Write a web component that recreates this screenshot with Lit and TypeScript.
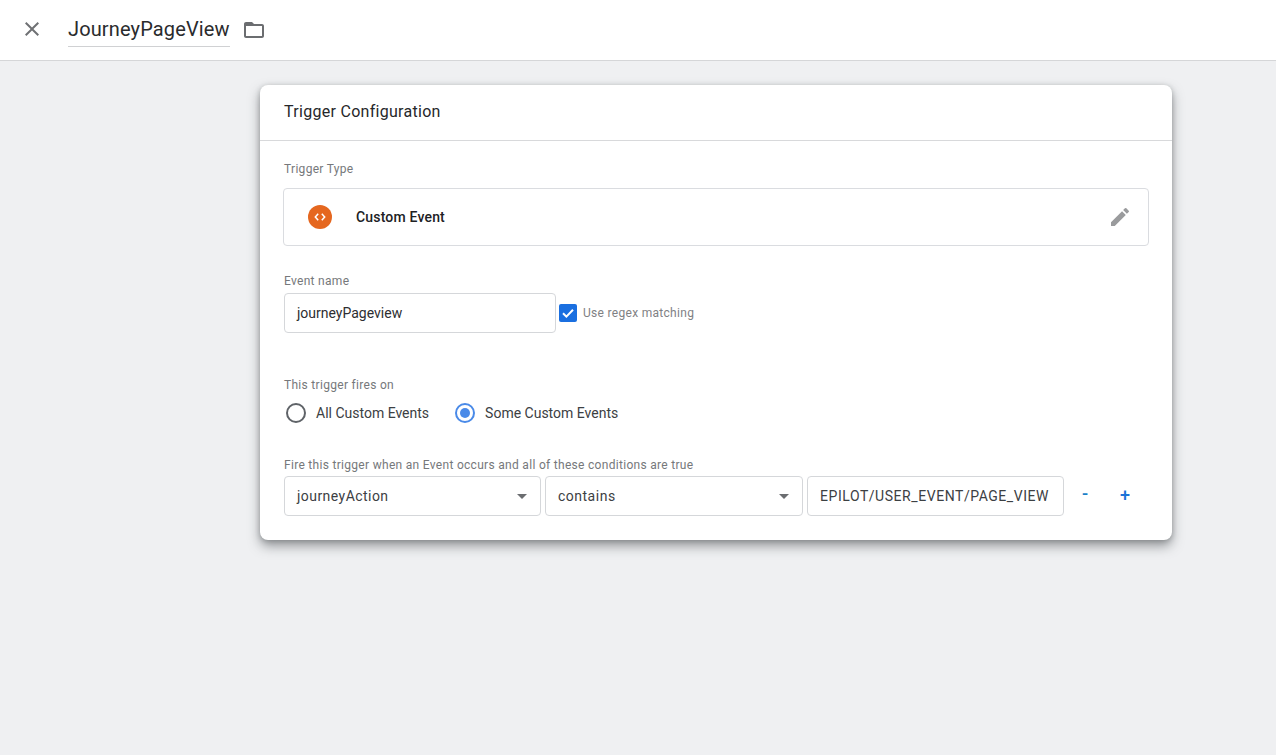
import { LitElement, html, css } from "lit";
import { customElement } from "lit/decorators.js";

@customElement("app-root")
export class AppRoot extends LitElement {
  static styles = css`
    :host { display: block; width: 100%; height: 755px; background: #eff0f2; font-family: Roboto, "Liberation Sans", sans-serif; color: #202124; overflow: hidden; }
    * { box-sizing: border-box; }
    .top { height: 61px; background: #fff; border-bottom: 1px solid #d5d6d8; display: flex; align-items: center; padding-left: 20px; }
    .close { width: 24px; height: 24px; display: block; margin-right: 24px; margin-top: -2px; }
    .name { font-size: 20px; line-height: 24px; height: 35px; width: 162px; padding-top: 5px; border-bottom: 1px solid #d0d1d3; color: #2a2b2d; margin-top: -1px; letter-spacing: .13px; white-space: nowrap; }
    .folder { width: 24px; height: 24px; margin-left: 12px; margin-top: -1px; display: block; }
    .main { padding: 24px 0 0 260px; }
    .card { width: 912px; height: 455px; background: #fff; border-radius: 8px; box-shadow: 0 6px 12px rgba(60,64,67,.5), 0 1px 5px rgba(60,64,67,.25); }
    .head { height: 56px; padding: 0 24px 2px; font-size: 16px; letter-spacing: .29px; display: flex; align-items: center; border-bottom: 1px solid #d8d9db; color: #26272a; }
    .body { padding: 21px 23px 0 24px; }
    .lbl { font-size: 12px; line-height: 14px; letter-spacing: .3px; color: #76787b; }
    .type { margin-top: 12px; margin-left: -1px; height: 58px; border: 1px solid #dadce0; border-radius: 4px; display: flex; align-items: center; padding: 0 16px 0 24px; }
    .badge { width: 24px; height: 24px; border-radius: 50%; background: #e5671f; display: flex; align-items: center; justify-content: center; }
    .badge svg { width: 14px; height: 14px; display: block; }
    .type b { font-weight: 500; font-size: 14px; letter-spacing: .18px; margin-left: 24px; flex: 1; color: #202124; }
    .pencil { width: 24px; height: 24px; display: block; }
    .ev { margin-top: 28px; }
    .row { display: flex; align-items: center; }
    .input { height: 40px; border: 1px solid #d5d7da; border-radius: 4px; font-size: 14px; display: flex; align-items: center; padding-left: 12px; color: #3c4043; background: #fff; white-space: nowrap; }
    .ev .input { width: 272px; margin-top: 5px; color: #2d2e31; }
    .chk { width: 18px; height: 18px; background: #1a6fe0; border-radius: 2px; margin-left: 3px; display: flex; align-items: center; justify-content: center; margin-top: 5px; }
    .chk svg { width: 14px; height: 14px; display: block; }
    .chklbl { font-size: 12px; letter-spacing: .3px; color: #7f8184; margin-left: 6px; margin-top: 4px; }
    .fires { margin-top: 45px; }
    .radios { display: flex; align-items: center; margin-top: 9px; height: 24px; padding-left: 2px; font-size: 14px; color: #3c4043; }
    .radio { width: 20px; height: 20px; border-radius: 50%; border: 2px solid #5f6368; flex: none; display: flex; align-items: center; justify-content: center; }
    .radio.on { border-color: #4a8ae8; margin-left: 26px; }
    .radio.on i { width: 10px; height: 10px; border-radius: 50%; background: #4a8ae8; display: block; }
    .radios span { margin-left: 10px; }
    .cond { margin-top: 33px; }
    .conds { display: flex; align-items: center; margin-top: 4px; }
    .sel { justify-content: space-between; padding-right: 13px; }
    .sel svg { width: 10px; height: 5px; display: block; }
    .s1 { width: 257px; letter-spacing: .45px; }
    .s2 { width: 258px; margin-left: 4px; letter-spacing: .5px; }
    .s3 { width: 257px; margin-left: 4px; letter-spacing: .55px; }
    .pm { color: #1a73d8; font-size: 18px; font-weight: 500; width: 16px; text-align: center; line-height: 20px; margin-top: -2px; }
    .minus { margin-left: 13px; color: #1a80c8; margin-top: -4px; }
    .plus { margin-left: 24px; }
  `;

  render() {
    return html`
      <div class="top">
        <svg class="close" viewBox="0 0 24 24"><path fill="#6f7174" d="M19 6.41 17.59 5 12 10.59 6.41 5 5 6.41 10.59 12 5 17.59 6.41 19 12 13.41 17.59 19 19 17.59 13.41 12z"/></svg>
        <div class="name">JourneyPageView</div>
        <svg class="folder" viewBox="0 0 24 24"><path fill="#6b6d70" d="M20 6h-8l-2-2H4c-1.1 0-1.99.9-1.99 2L2 18c0 1.1.9 2 2 2h16c1.1 0 2-.9 2-2V8c0-1.1-.9-2-2-2zm0 12H4V8h16v10z"/></svg>
      </div>
      <div class="main">
        <div class="card">
          <div class="head">Trigger Configuration</div>
          <div class="body">
            <div class="lbl">Trigger Type</div>
            <div class="type">
              <div class="badge"><svg viewBox="0 0 14 14"><path fill="none" stroke="#fff" stroke-width="1.5" d="M5.200 3.800 2.300 7l2.900 3.200M8.800 3.800 11.700 7l-2.900 3.200"/></svg></div>
              <b>Custom Event</b>
              <svg class="pencil" viewBox="0 0 24 24"><path fill="#9a9b9d" d="M3 17.25V21h3.750L17.810 9.940l-3.750-3.750L3 17.250zM20.710 7.040a1 1 0 0 0 0-1.410l-2.340-2.340a1 1 0 0 0-1.410 0l-1.830 1.830 3.750 3.750 1.830-1.830z"/></svg>
            </div>
            <div class="ev">
              <div class="lbl">Event name</div>
              <div class="row">
                <div class="input">journeyPageview</div>
                <div class="chk"><svg viewBox="0 0 14 14"><path fill="none" stroke="#fff" stroke-width="2" d="M2 7.200 5.400 10.600 12 3.800"/></svg></div>
                <div class="chklbl">Use regex matching</div>
              </div>
            </div>
            <div class="fires lbl">This trigger fires on</div>
            <div class="radios">
              <div class="radio"></div><span>All Custom Events</span>
              <div class="radio on"><i></i></div><span>Some Custom Events</span>
            </div>
            <div class="cond lbl">Fire this trigger when an Event occurs and all of these conditions are true</div>
            <div class="conds">
              <div class="input sel s1">journeyAction<svg viewBox="0 0 12 6"><path fill="#6b6d70" d="M0 0h12L6 6z"/></svg></div>
              <div class="input sel s2">contains<svg viewBox="0 0 12 6"><path fill="#6b6d70" d="M0 0h12L6 6z"/></svg></div>
              <div class="input s3">EPILOT/USER_EVENT/PAGE_VIEW</div>
              <div class="pm minus">-</div>
              <div class="pm plus">+</div>
            </div>
          </div>
        </div>
      </div>
    `;
  }
}
